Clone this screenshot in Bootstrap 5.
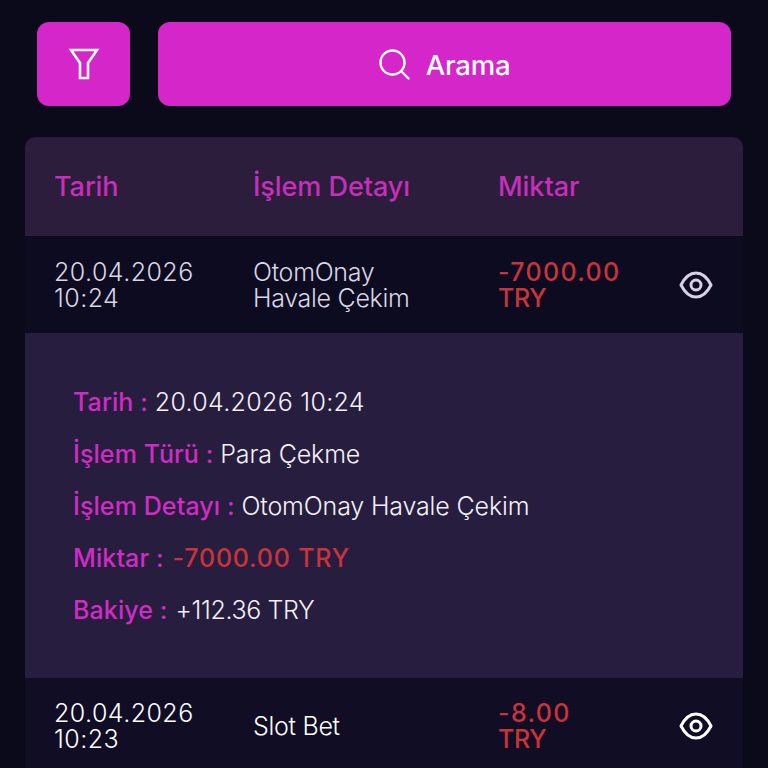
<!DOCTYPE html>
<html lang="tr">
<head>
<meta charset="utf-8">
<title>İşlem Geçmişi</title>
<link href="https://cdn.jsdelivr.net/npm/bootstrap@5.3.0/dist/css/bootstrap.min.css" rel="stylesheet">
<style>
html,body{height:768px;overflow:hidden}
body{background:#0a0a1a;font-family:Inter,"Noto Sans",sans-serif;color:#fff}
.page-wrap{padding:22px 25px 0}
.action-bar{padding:0 12px;gap:28px;margin-bottom:31px}
.action-btn{height:84px;border:0;border-radius:12px;background:#d426c9;color:#fff;font-size:27.5px;font-weight:500;letter-spacing:-.2px}
.action-btn:hover,.action-btn:active{background:#d426c9!important;color:#fff!important}
.filter-btn{width:93px;flex:none}
.search-btn{flex:1 1 auto;gap:16px}
.search-label{padding-top:4px}
.tx-panel{border-radius:10px 10px 0 0;overflow:hidden}
.tx-row{padding-left:29px;padding-right:30px}
.tx-head{height:99px;padding-top:2px;background:#2d1d3c;color:#c72eb9;font-size:27px;font-weight:500;letter-spacing:-.05px}
.tx-item{height:97px;background:#0d0b20;font-size:25px;font-weight:300;line-height:26px;color:#d9d5e4}
.tx-item.second{height:96px;background:#100d25;color:#fff}
.tx-line{display:block;white-space:nowrap}
.c-date{width:199px;flex:none;letter-spacing:.45px}
.c-info{width:245px;flex:none;letter-spacing:-.3px}
.tx-head .c-date,.tx-head .c-info{letter-spacing:inherit}
.c-amt{width:150px;flex:none}
.c-eye{flex:1 1 auto;display:flex;justify-content:flex-end}
.neg{color:#c9333c;font-weight:500}
.neg-num{letter-spacing:1.35px}
.neg-cur{letter-spacing:-.25px}
.tx-detail{height:345px;background:#271d3f;padding:43px 48px 0;font-size:25px;font-weight:300;letter-spacing:-.15px;color:#f3f1f7}
.tx-detail p{margin:0;height:52px;line-height:52px;white-space:nowrap}
.tx-detail b{color:#d02cc4;font-weight:500;letter-spacing:.1px}
.tx-detail .num{letter-spacing:.3px}
.tx-detail .bal{letter-spacing:-.35px;margin-left:1px}
.tx-detail .neg{letter-spacing:.8px;margin-left:2px}
</style>
</head>
<body>
<div class="page-wrap">
  <div class="d-flex action-bar">
    <button class="btn action-btn filter-btn d-flex align-items-center justify-content-center p-0" aria-label="Filtre">
      <svg width="32" height="34" viewBox="0 0 32 34" fill="none" stroke="#fff" stroke-width="2.6"><path d="M3 3h26L20 16v15h-8V16z"/></svg>
    </button>
    <button class="btn action-btn search-btn d-flex align-items-center justify-content-center p-0">
      <svg width="31" height="31" viewBox="0 0 31 31" fill="none" stroke="#fff" stroke-width="2.4" stroke-linecap="round"><circle cx="13.5" cy="13.5" r="12"/><path d="M22.5 22.5l7 7"/></svg>
      <span class="search-label">Arama</span>
    </button>
  </div>
  <div class="tx-panel">
    <div class="tx-row tx-head d-flex align-items-center">
      <div class="c-date">Tarih</div><div class="c-info">İşlem Detayı</div><div class="c-amt">Miktar</div>
    </div>
    <div class="tx-row tx-item d-flex align-items-center">
      <div class="c-date"><span class="tx-line">20.04.2026</span><span class="tx-line">10:24</span></div>
      <div class="c-info"><span class="tx-line">OtomOnay</span><span class="tx-line">Havale Çekim</span></div>
      <div class="c-amt neg"><span class="tx-line neg-num">-7000.00</span><span class="tx-line neg-cur">TRY</span></div>
      <div class="c-eye"><svg width="34" height="28" viewBox="0 0 34 28" fill="none" stroke="#d9d0e6" stroke-width="3"><path d="M2 14C6 6 11 2 17 2s11 4 15 12c-4 8-9 12-15 12S6 22 2 14z" stroke-linejoin="round"/><circle cx="17" cy="14" r="5"/></svg></div>
    </div>
    <div class="tx-detail">
      <p><b>Tarih :</b> <span class="num">20.04.2026 10:24</span></p>
      <p><b>İşlem Türü :</b> Para Çekme</p>
      <p><b>İşlem Detayı :</b> OtomOnay Havale Çekim</p>
      <p><b>Miktar :</b> <span class="neg">-7000.00 TRY</span></p>
      <p><b>Bakiye :</b> <span class="bal">+112.36 TRY</span></p>
    </div>
    <div class="tx-row tx-item second d-flex align-items-center">
      <div class="c-date"><span class="tx-line">20.04.2026</span><span class="tx-line">10:23</span></div>
      <div class="c-info">Slot Bet</div>
      <div class="c-amt neg"><span class="tx-line neg-num">-8.00</span><span class="tx-line neg-cur">TRY</span></div>
      <div class="c-eye"><svg width="34" height="28" viewBox="0 0 34 28" fill="none" stroke="#fff" stroke-width="3"><path d="M2 14C6 6 11 2 17 2s11 4 15 12c-4 8-9 12-15 12S6 22 2 14z" stroke-linejoin="round"/><circle cx="17" cy="14" r="5"/></svg></div>
    </div>
  </div>
</div>
</body>
</html>
